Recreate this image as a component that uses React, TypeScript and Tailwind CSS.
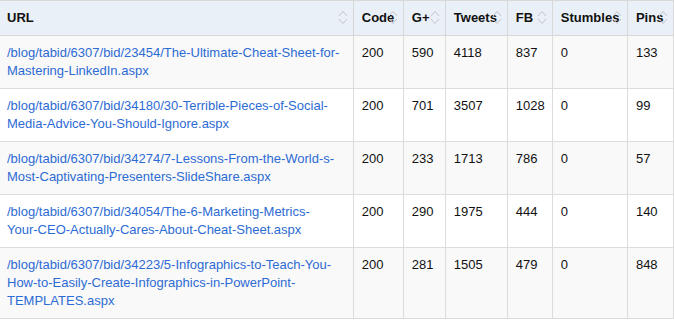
import React from 'react';

type Row = {
    url: string[];
    code: number;
    gplus: number;
    tweets: number;
    fb: number;
    stumbles: number;
    pins: number;
};

const rows: Row[] = [
    {
        url: ["/blog/tabid/6307/bid/23454/The-Ultimate-Cheat-Sheet-for-", "Mastering-LinkedIn.aspx"],
        code: 200, gplus: 590, tweets: 4118, fb: 837, stumbles: 0, pins: 133,
    },
    {
        url: ["/blog/tabid/6307/bid/34180/30-Terrible-Pieces-of-Social-", "Media-Advice-You-Should-Ignore.aspx"],
        code: 200, gplus: 701, tweets: 3507, fb: 1028, stumbles: 0, pins: 99,
    },
    {
        url: ["/blog/tabid/6307/bid/34274/7-Lessons-From-the-World-s-", "Most-Captivating-Presenters-SlideShare.aspx"],
        code: 200, gplus: 233, tweets: 1713, fb: 786, stumbles: 0, pins: 57,
    },
    {
        url: ["/blog/tabid/6307/bid/34054/The-6-Marketing-Metrics-", "Your-CEO-Actually-Cares-About-Cheat-Sheet.aspx"],
        code: 200, gplus: 290, tweets: 1975, fb: 444, stumbles: 0, pins: 140,
    },
    {
        url: ["/blog/tabid/6307/bid/34223/5-Infographics-to-Teach-You-", "How-to-Easily-Create-Infographics-in-PowerPoint-", "TEMPLATES.aspx"],
        code: 200, gplus: 281, tweets: 1505, fb: 479, stumbles: 0, pins: 848,
    },
];

const columns = [
    { title: "URL", width: "w-[353px]", pad: "pl-[7px]" },
    { title: "Code", width: "w-[50px]", pad: "pl-2" },
    { title: "G+", width: "w-[42px]", pad: "pl-2" },
    { title: "Tweets", width: "w-[62px]", pad: "pl-2" },
    { title: "FB", width: "w-[45px]", pad: "pl-2" },
    { title: "Stumbles", width: "w-[75px]", pad: "pl-2" },
    { title: "Pins", width: "w-[46px]", pad: "pl-2" },
];

// up/down sort arrows in the header cells
function SortIcon() {
    return (
        <svg className="absolute right-[5px] top-[9px]" width="10" height="15" viewBox="0 0 10 15" fill="none">
            <polyline points="1,6 5,1.5 9,6" stroke="#c4c4c4" strokeWidth="1" />
            <polyline points="1,9 5,13.5 9,9" stroke="#c4c4c4" strokeWidth="1" />
        </svg>
    );
}

function App() {
    return (
        <div className="w-[674px] h-[322px] overflow-hidden bg-white" style={{ fontFamily: '"Liberation Sans", Arial, sans-serif' }}>
            <table className="table-fixed border-collapse w-[674px] text-[13px] leading-[18px]">
                <thead>
                    <tr className="bg-[#e9f0f7]">
                        {columns.map((c, i) => (
                            <th
                                key={c.title}
                                className={`relative ${c.width} ${c.pad} pr-2 py-2 text-left font-bold text-[#111] border-t border-b border-[#d8d8d8] ${i === 0 ? "border-r" : "border-x"}`}
                            >
                                {c.title}
                                <SortIcon />
                            </th>
                        ))}
                    </tr>
                </thead>
                <tbody>
                    {rows.map((r, idx) => (
                        <tr key={idx} className={idx % 2 === 0 ? "bg-[#f9f9f9]" : "bg-white"}>
                            <td className="pl-[7px] pr-2 py-2 align-top border-b border-r border-[#dcdcdc]">
                                <a href="#" className="text-[#2d6bd4]">
                                    {r.url.map((line, j) => (
                                        <React.Fragment key={j}>
                                            {line}
                                            {j < r.url.length - 1 && <br />}
                                        </React.Fragment>
                                    ))}
                                </a>
                            </td>
                            {[r.code, r.gplus, r.tweets, r.fb, r.stumbles, r.pins].map((v, j) => (
                                <td key={j} className="pl-2 pr-1 py-2 align-top border border-t-0 border-[#dcdcdc] text-[#111]">
                                    {v}
                                </td>
                            ))}
                        </tr>
                    ))}
                </tbody>
            </table>
        </div>
    );
}

export default App;
